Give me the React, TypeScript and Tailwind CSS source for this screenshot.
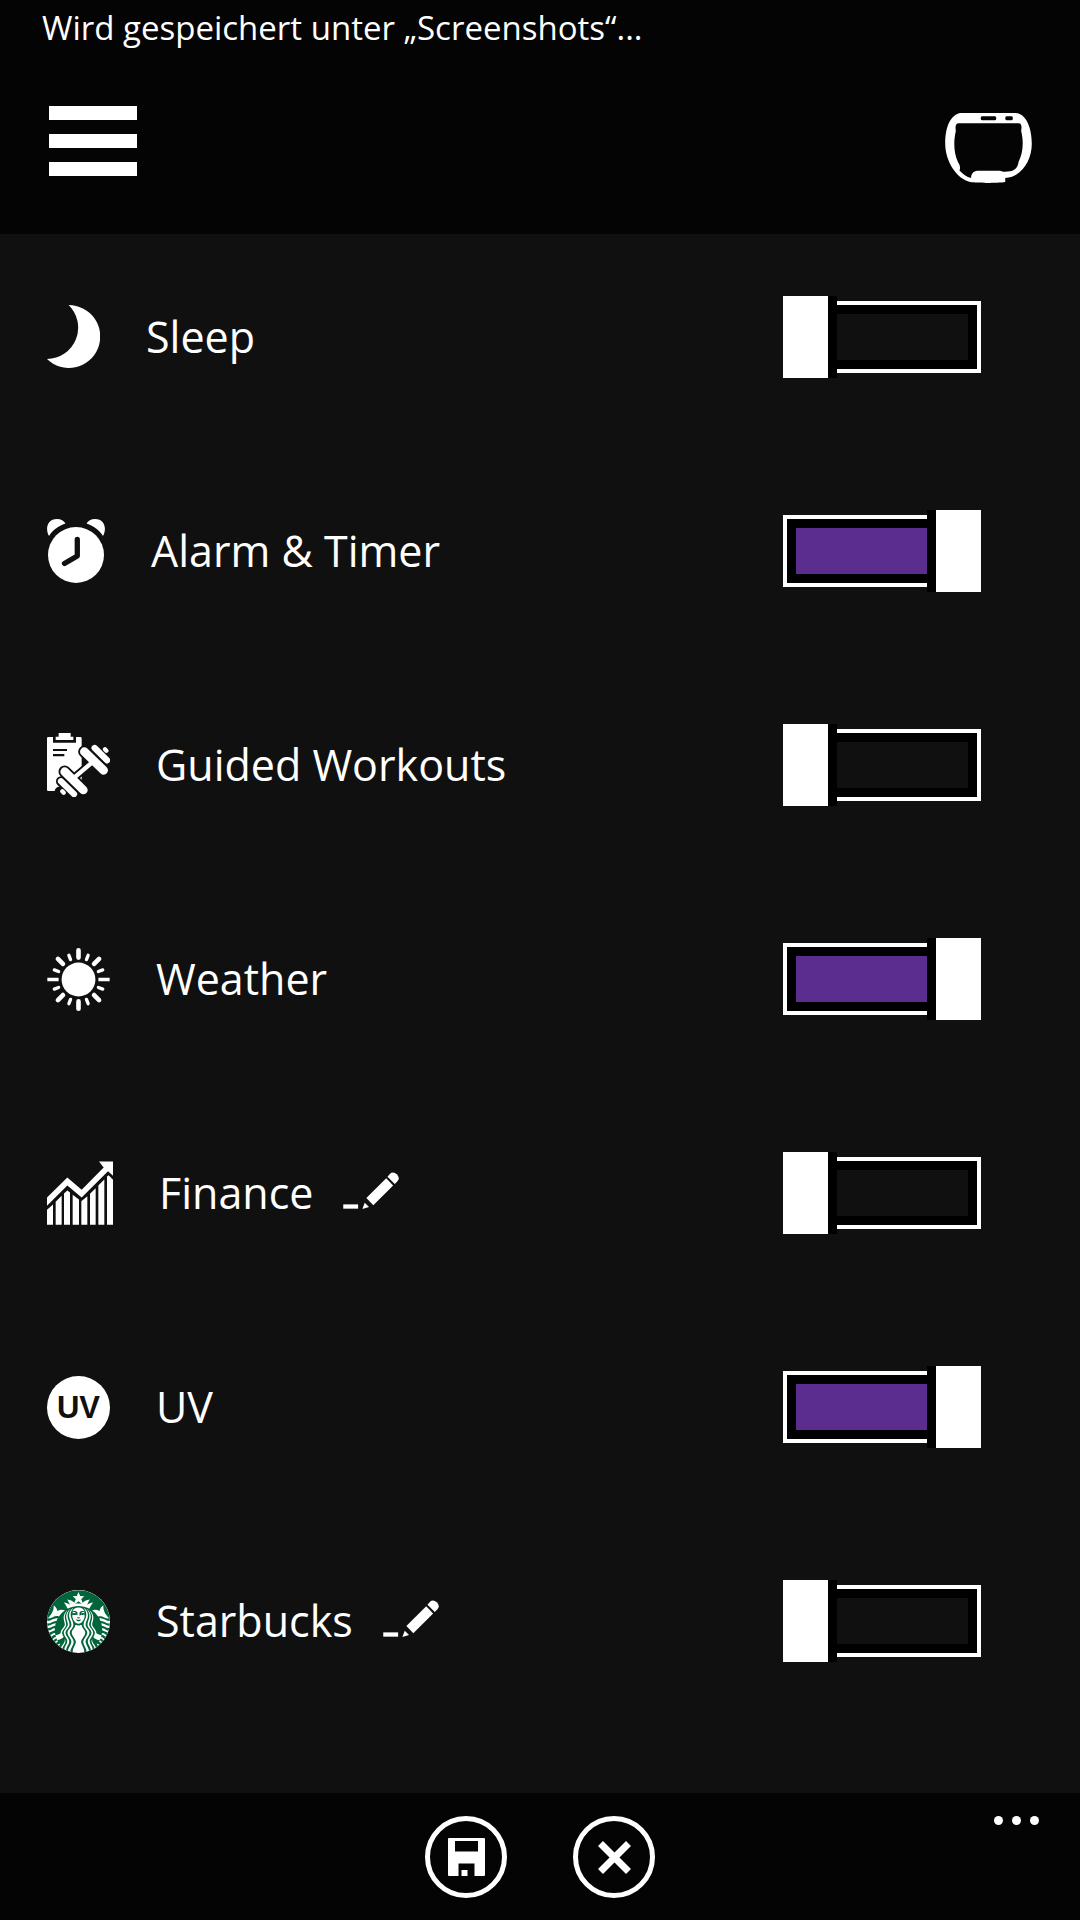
import { useState, type ReactNode } from "react";
import { SiStarbucks } from "react-icons/si";

function MoonIcon() {
  return (
    <svg width="53" height="64" viewBox="0 0 54 65" fill="white" aria-hidden="true">
      <path d="M22 0A32 32 0 1 1 0 55A32 32 0 0 0 22 0Z" />
    </svg>
  );
}

function AlarmIcon() {
  return (
    <svg width="58" height="64" viewBox="0 0 58 64" fill="white" aria-hidden="true">
      <circle cx="29" cy="36" r="28" />
      <path d="M2 17C-2 10 0 0 10 0C14 0 17 2 18.5 4.5C11 7 6 11 2 17Z" />
      <path d="M56 17C60 10 58 0 48 0C44 0 41 2 39.5 4.5C47 7 52 11 56 17Z" />
      <path
        d="M30.3 20.5V37L17.5 44.5"
        fill="none"
        stroke="#101010"
        strokeWidth="5.3"
        strokeLinecap="round"
        strokeLinejoin="round"
      />
    </svg>
  );
}

function WorkoutIcon() {
  return (
    <svg width="63" height="64" viewBox="51 39 189 192" fill="none" aria-hidden="true">
      <path d="M55 51H69V68H138V51H151Q155 51 155 55V213H55Q51 213 51 209V55Q51 51 55 51Z" fill="white" />
      <path d="M77 60V50H86V39H122V50H130V60Z" fill="white" />
      <path d="M69 87H111V93H69ZM69 102H103V109H69Z" fill="#101010" />
      <g stroke="#101010" strokeLinecap="round">
        <path d="M93 184L133 223" strokeWidth="30" />
        <path d="M86 212L100 228" strokeWidth="22" />
      </g>
      <g stroke="white" strokeLinecap="round">
        <path d="M93 184L132 222M194 84L231 121" strokeWidth="19" />
        <path d="M97 214L101 218M225 88L229 92" strokeWidth="13" />
      </g>
      <g stroke="#101010" strokeLinecap="round">
        <path d="M130 175L195 120" strokeWidth="24" />
        <path d="M163 95L221 151M104 155L160 210" strokeWidth="37" />
      </g>
      <g stroke="white" strokeLinecap="round">
        <path d="M130 175L195 120" strokeWidth="13" />
        <path d="M163 95L221 151M104 155L160 210" strokeWidth="26" />
      </g>
    </svg>
  );
}

function SunIcon() {
  return (
    <svg width="63" height="63" viewBox="-95 -95 190 190" stroke="white" strokeLinecap="round" aria-hidden="true">
      <circle r="51" fill="white" stroke="none" />
      <path d="M0 -88V-66M0 66V88M62 -62L47 -47M-62 -62L-47 -47M62 62L47 47M-62 62L-47 47" strokeWidth="14" />
      <path d="M-94 0H-60M60 0H94" strokeWidth="10" strokeLinecap="butt" />
      <path
        d="M29 -73L24 -60M-29 -73L-24 -60M29 73L24 60M-29 73L-24 60M73 -29L60 -24M-73 -29L-60 -24M73 29L60 24M-73 29L-60 24"
        strokeWidth="10"
      />
    </svg>
  );
}

function FinanceIcon() {
  return (
    <svg width="66" height="64" viewBox="51 61 198 191" fill="white" aria-hidden="true">
      <path d="M51 170L112 110L155 147L221 80L207 62H249V105L234 91L155 170L112 134L51 195Z" />
      <path d="M51 207L69 191V252H51ZM77 183L95 165V252H77ZM102 158L112 149L120 155V252H102ZM128 162L147 176V252H128ZM154 181L172 166V252H154ZM180 159L197 142V252H180ZM205 134L223 116V252H205ZM231 107L236 103L249 117V252H231Z" />
    </svg>
  );
}

function UvIcon() {
  return (
    <span
      aria-hidden="true"
      className="flex size-[63px] items-center justify-center rounded-full bg-white font-['Liberation_Sans',sans-serif] text-[31px] leading-none font-bold text-[#101010]"
    >
      UV
    </span>
  );
}

function StarbucksIcon() {
  return (
    <span className="flex size-[63px] overflow-hidden rounded-full bg-white">
      <SiStarbucks size={63} color="#00653b" aria-hidden="true" />
    </span>
  );
}

function PencilIcon() {
  return (
    <svg width="56" height="37" viewBox="936 93 168 112" fill="white" aria-hidden="true">
      <path d="M936 191H981V204H936Z" />
      <path d="M994 205L1001 186L1014 199Z" />
      <path d="M1006 172L1066 112L1087 134L1027 194Z" />
      <path d="M1070 107L1077 99Q1087 90 1098 100Q1109 111 1100 121L1092 129Z" />
    </svg>
  );
}

function BandIcon() {
  return (
    <svg width="87" height="70" viewBox="75 68 261 211" fill="white" fillRule="evenodd" aria-hidden="true">
      <path d="M122 68H288C318 70 336 112 336 160C336 214 304 260 256 264V276C230 280 166 279 154 277C108 268 75 212 75 160C75 108 92 72 122 68ZM114 99C106 101 105 108 107 122C100 152 100 188 114 217C120 224 121 236 118 241C128 252 140 261 153 264C153 251 160 243 172 242H240L250 245C284 246 293 236 296 216C310 186 312 156 304 122C306 108 305 101 298 99ZM186 78H225Q229 78 229 84Q229 90 225 90H186Q182 90 182 84Q182 78 186 78ZM260 78H275Q279 78 279 84Q279 90 275 90H260Q256 90 256 84Q256 78 260 78Z" />
    </svg>
  );
}

interface Tile {
  id: string;
  name: string;
  icon: ReactNode;
  enabled: boolean;
  editable?: boolean;
}

const tiles: Tile[] = [
  { id: "sleep", name: "Sleep", icon: <MoonIcon />, enabled: false },
  { id: "alarm", name: "Alarm & Timer", icon: <AlarmIcon />, enabled: true },
  { id: "workouts", name: "Guided Workouts", icon: <WorkoutIcon />, enabled: false },
  { id: "weather", name: "Weather", icon: <SunIcon />, enabled: true },
  { id: "finance", name: "Finance", icon: <FinanceIcon />, enabled: false, editable: true },
  { id: "uv", name: "UV", icon: <UvIcon />, enabled: true },
  { id: "starbucks", name: "Starbucks", icon: <StarbucksIcon />, enabled: false, editable: true },
];

interface ToggleProps {
  id: string;
  checked: boolean;
  onChange: (checked: boolean) => void;
}

function Toggle({ id, checked, onChange }: ToggleProps) {
  return (
    <label className={`relative flex h-[82px] w-[198px] shrink-0 items-center ${checked ? "flex-row-reverse" : ""}`}>
      <input
        id={id}
        type="checkbox"
        role="switch"
        className="sr-only"
        checked={checked}
        onChange={(e) => onChange(e.target.checked)}
      />
      <span className="h-full w-[45px] bg-white" />
      <span className="h-full w-[9px] bg-black" />
      <span
        className={`flex h-[72px] flex-1 border-y-4 border-white bg-black py-[9px] ${
          checked ? "border-l-4 pl-[9px]" : "border-r-4 pr-[9px]"
        }`}
      >
        <span className={`flex-1 ${checked ? "bg-[#5b2d8e]" : "bg-[#101010]"}`} />
      </span>
    </label>
  );
}

function TileRow({ tile }: { tile: Tile }) {
  const [enabled, setEnabled] = useState(tile.enabled);

  return (
    <li className="flex h-[82px] items-center pr-[99px] pl-[47px]">
      {tile.icon}
      <div className="ml-[46px] flex flex-1 items-baseline gap-[30px]">
        <label htmlFor={tile.id} className="text-[43px] leading-[60px]">
          {tile.name}
        </label>
        {tile.editable && (
          <button type="button" aria-label={`Edit ${tile.name}`}>
            <PencilIcon />
          </button>
        )}
      </div>
      <Toggle id={tile.id} checked={enabled} onChange={setEnabled} />
    </li>
  );
}

export default function App() {
  return (
    <div className="flex min-h-screen flex-col bg-[#101010] font-['Open_Sans','Noto_Sans',sans-serif] text-white">
      <header className="bg-[#040404] pb-[51px]">
        <p className="pt-1 pl-[42px] text-[33px] leading-[48px]">Wird gespeichert unter „Screenshots“...</p>
        <div className="mt-[54px] flex items-start justify-between pr-12 pl-[49px]">
          <button type="button" aria-label="Menu" className="flex w-[88px] flex-col gap-[14px]">
            <span className="h-[14px] w-full bg-white" />
            <span className="h-[14px] w-full bg-white" />
            <span className="h-[14px] w-full bg-white" />
          </button>
          <button type="button" aria-label="Band" className="pt-[7px]">
            <BandIcon />
          </button>
        </div>
      </header>

      <main className="flex-1 pt-[62px] pb-[130px]">
        <ul className="flex flex-col gap-[132px]">
          {tiles.map((tile) => (
            <TileRow key={tile.id} tile={tile} />
          ))}
        </ul>
      </main>

      <footer className="grid grid-cols-[1fr_auto_1fr] items-start bg-[#040404] pt-[23px] pb-[22px]">
        <div className="col-start-2 flex gap-[66px]">
          <button
            type="button"
            aria-label="Save"
            className="flex size-[82px] items-center justify-center rounded-full border-5 border-white"
          >
            <svg width="37" height="38" viewBox="0 0 37 38" fill="white" fillRule="evenodd" aria-hidden="true">
              <path d="M1 0H36Q37 0 37 1V37Q37 38 36 38H26.5V25.5H10.5V38H1Q0 38 0 37V1Q0 0 1 0ZM7 3V13.5H30V3Z" />
              <path d="M13.5 32H19.5V38H13.5Z" />
            </svg>
          </button>
          <button
            type="button"
            aria-label="Cancel"
            className="flex size-[82px] items-center justify-center rounded-full border-5 border-white"
          >
            <svg width="33" height="33" viewBox="0 0 33 33" stroke="white" strokeWidth="7" aria-hidden="true">
              <path d="M2.5 2.5L30.5 30.5M30.5 2.5L2.5 30.5" />
            </svg>
          </button>
        </div>
        <button type="button" aria-label="More" className="mr-[41px] flex gap-[9px] justify-self-end">
          <span className="size-[9px] rounded-full bg-white" />
          <span className="size-[9px] rounded-full bg-white" />
          <span className="size-[9px] rounded-full bg-white" />
        </button>
      </footer>
    </div>
  );
}
